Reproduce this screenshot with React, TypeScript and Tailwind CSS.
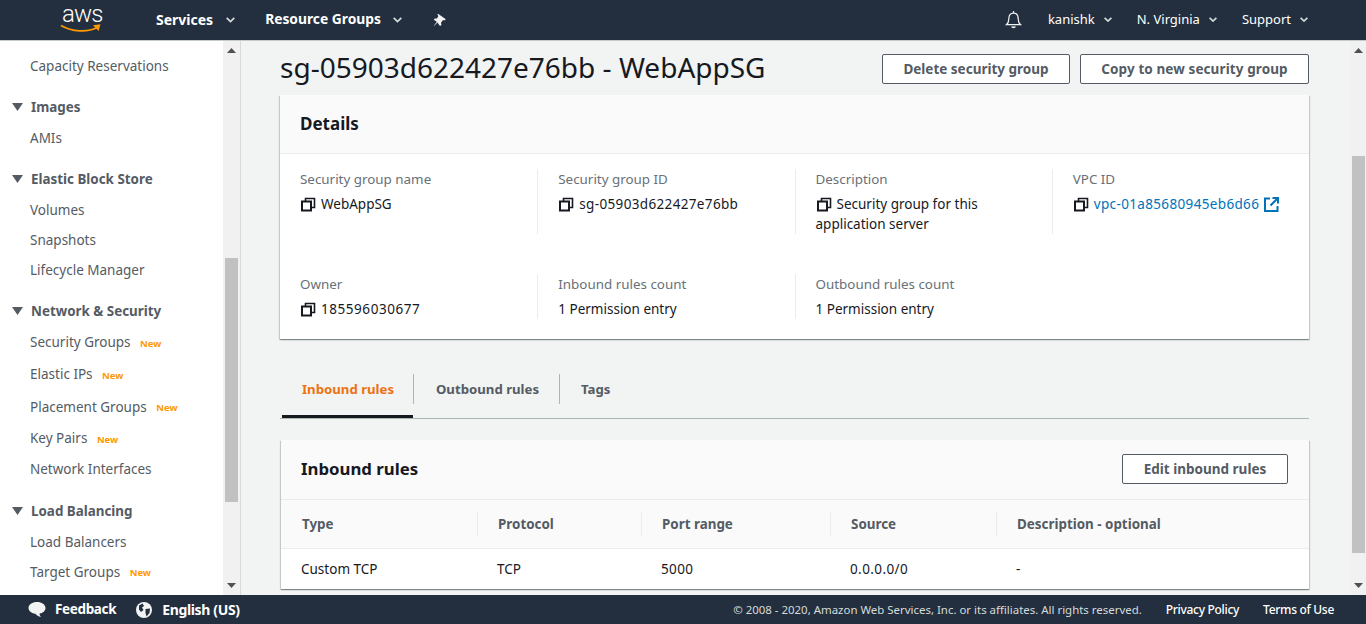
import React from 'react';

function CopyIcon() {
  return (
    <svg width="15" height="15" viewBox="0 0 15 15" className="shrink-0" fill="none" stroke="#16191f" strokeWidth="2">
      <rect x="1" y="4.5" width="9" height="9" />
      <path d="M4.5 4V1.500H13.500V10.500H10.500" strokeWidth="1.6" />
    </svg>
  );
}

function ExternalIcon() {
  return (
    <svg width="15" height="15" viewBox="0 0 15 15" fill="none" stroke="#0073bb" strokeWidth="2" className="shrink-0">
      <path d="M6 1.500H1V14H13.500V9" />
      <path d="M8.500 1H14V6.500M14 1L6.500 8.500" />
    </svg>
  );
}

function Caret() {
  return (
    <svg width="8" height="5" viewBox="0 0 8 5" className="shrink-0 ml-[9px]" fill="none" stroke="#d5dbdb" strokeWidth="1.7">
      <path d="M.6.8L4 4 7.400.8" />
    </svg>
  );
}

function NavCaret({ gap }: { gap: string }) {
  return (
    <svg width="9" height="6" viewBox="0 0 9 6" className={`shrink-0 ${gap}`} fill="none" stroke="#d5dbdb" strokeWidth="1.7">
      <path d="M.7.8L4.500 4.600 8.300.8" />
    </svg>
  );
}

function TopBar() {
  return (
    <header className="h-[41px] shrink-0 bg-[#232f3e] border-b border-b-[#c5cbcb] flex items-center text-[13px] text-white">
      <div className="w-[156px] shrink-0 pl-[60px] flex flex-col items-start mb-[7px]">
        <span className="text-[24px] leading-[28px] font-light tracking-[-0.8px] ml-[2px] [font-family:Roboto,sans-serif]">aws</span>
        <svg width="42" height="10" viewBox="0 0 42 10" className="mt-[-5px]">
          <path d="M1 2.500C12 9 28 9.500 37 4.500" fill="none" stroke="#f90" strokeWidth="1.8" />
          <path d="M33 2.200L40.500 1.200 38.500 8Z" fill="#f90" />
        </svg>
      </div>
      <span className="font-bold text-[14px] mb-px">Services</span>
      <NavCaret gap="ml-[13px]" />
      <span className="font-bold text-[13.8px] ml-[30px] mb-px">Resource Groups</span>
      <NavCaret gap="ml-[12px]" />
      <svg width="14" height="14" viewBox="0 0 14 14" className="ml-[31px]" fill="#f2f3f3">
        <path d="M5 .8L12.800 6.200 11.400 7.400 10 7 8 9.800 8.400 12 7 13 4.400 9.600 1 13 .8 12.800 3.800 8.800.8 6.800 1.800 5.400 4 5.600 5.400 3 4.400 1.600Z" />
      </svg>
      <div className="ml-auto flex items-center mb-px">
        <svg width="17" height="19" viewBox="0 0 18 20" fill="none" stroke="#f2f3f3" strokeWidth="1.3">
          <path d="M1.500 15.500C3.500 14 4 12.500 4 9.500 4 6 5.500 3.200 9 3.200S14 6 14 9.500C14 12.500 14.500 14 16.500 15.500Z" />
          <path d="M9 1v2" />
          <path d="M7 17.500C7.500 19 10.500 19 11 17.500" fill="#f2f3f3" />
        </svg>
        <span className="ml-[26px]">kanishk</span>
        <Caret />
        <span className="ml-[25px]">N. Virginia</span>
        <Caret />
        <span className="ml-[25px]">Support</span>
        <Caret />
        <span className="w-[58px]" />
      </div>
    </header>
  );
}

function NavHeading({ label }: { label: string }) {
  return (
    <div className="h-[30px] mt-[11px] mb-px flex items-center pl-[12px] font-bold text-[#545b64] text-[13.4px]">
      <svg width="11" height="8" viewBox="0 0 11 8" className="mr-[8px]"><path d="M0 0H11L5.500 8Z" fill="#545b64" /></svg>
      {label}
    </div>
  );
}

function NavItem({ label, isNew, h = 'h-[30px]' }: { label: string; isNew?: boolean; h?: string }) {
  return (
    <div className={`${h} flex items-center pl-[30px] text-[13.5px] text-[#545b64]`}>
      {label}
      {isNew && <span className="ml-[9.5px] mt-[3px] text-[9.5px] font-bold text-[#ff9900]">New</span>}
    </div>
  );
}

function Scrollbar({ wide, top, height }: { wide: string; top: string; height: string }) {
  return (
    <div className={`${wide} shrink-0 bg-[#f1f1f1] flex flex-col items-center relative`}>
      <svg width="9" height="5" viewBox="0 0 9 5" className="absolute top-[7px]"><path d="M0 5L4.500 0 9 5Z" fill="#505050" /></svg>
      <div className={`${top} ${height} w-[13px] bg-[#c1c1c1]`} />
      <svg width="9" height="5" viewBox="0 0 9 5" className="absolute bottom-[7px]"><path d="M0 0L4.500 5 9 0Z" fill="#505050" /></svg>
    </div>
  );
}

function Sidebar() {
  return (
    <aside className="w-[241px] shrink-0 flex bg-white border-r border-r-[#d5dbdb]">
      <nav className="w-[223px] shrink-0 pt-[10px] overflow-hidden">
        <NavItem label="Capacity Reservations" />
        <NavHeading label="Images" />
        <NavItem label="AMIs" />
        <NavHeading label="Elastic Block Store" />
        <NavItem label="Volumes" />
        <NavItem label="Snapshots" />
        <NavItem label="Lifecycle Manager" />
        <NavHeading label="Network & Security" />
        <NavItem label="Security Groups" isNew h="h-[31px]" />
        <NavItem label="Elastic IPs" isNew h="h-[33px]" />
        <NavItem label="Placement Groups" isNew h="h-[32px]" />
        <NavItem label="Key Pairs" isNew h="h-[31px]" />
        <NavItem label="Network Interfaces" h="h-[31px]" />
        <NavHeading label="Load Balancing" />
        <NavItem label="Load Balancers" />
        <NavItem label="Target Groups" isNew />
      </nav>
      <Scrollbar wide="w-[17px]" top="mt-[217px]" height="h-[244px]" />
    </aside>
  );
}

const cardShadow = 'shadow-[0_1px_1px_0_rgba(0,28,36,0.3),1px_1px_1px_0_rgba(0,28,36,0.15),-1px_1px_1px_0_rgba(0,28,36,0.15)]';

function Field({ label, value, divider, noCopy, link, spacing = '' }: { label: string; value: string; divider?: boolean; noCopy?: boolean; link?: boolean; spacing?: string }) {
  return (
    <div className={`pl-[20px] pr-[24px] ${divider ? 'border-l border-l-[#eaeded]' : ''}`}>
      <div className="text-[13.4px] leading-[20px] text-[#687078]">{label}</div>
      <div className={`mt-[5px] text-[13.5px] leading-[20px] ${link ? 'text-[#0073bb]' : 'text-[#16191f]'}`}>
        {!noCopy && <span className="inline-block align-[-3px] ml-px mr-[5px]"><CopyIcon /></span>}
        <span className={spacing}>{value}</span>
        {link && <span className="inline-block align-[-3px] ml-[5px]"><ExternalIcon /></span>}
      </div>
    </div>
  );
}

function DetailsCard() {
  return (
    <section className={`mt-[11px] h-[244px] bg-white ${cardShadow}`}>
      <div className="h-[59px] bg-[#fafafa] border-b border-b-[#eaeded] pl-[20px] flex items-center text-[17px] font-bold text-[#16191f]">Details</div>
      <div className="grid grid-cols-4 mt-[15px] h-[65px]">
        <Field label="Security group name" value="WebAppSG" />
        <Field divider label="Security group ID" value="sg-05903d622427e76bb" spacing="tracking-[0.35px]" />
        <Field divider label="Description" value="Security group for this application server" />
        <Field divider label="VPC ID" value="vpc-01a85680945eb6d66" link spacing="tracking-[0.35px]" />
      </div>
      <div className="grid grid-cols-4 mt-[40px] h-[45px]">
        <Field label="Owner" value="185596030677" spacing="tracking-[0.55px]" />
        <Field divider label="Inbound rules count" value="1 Permission entry" noCopy />
        <Field divider label="Outbound rules count" value="1 Permission entry" noCopy />
        <div className="" />
      </div>
    </section>
  );
}

function Tabs() {
  return (
    <div className="mt-[35px] h-[45px] flex border-b border-b-[#a9b8ae] text-[13.2px] font-bold text-[#545b64] pl-[2px]">
      <div className="w-[131px] h-[44px] border-b-[3px] border-b-[#16191f] pt-[3px] pl-[1px] flex items-start justify-center text-[#ec7211]">
        <span className="leading-[22px] mt-[1px]">Inbound rules</span>
      </div>
      <div className="w-[147px] h-[30px] pt-[2px] pl-[2px] border-l border-r border-[#aab7b8] flex items-center justify-center">Outbound rules</div>
      <div className="pl-[21px] h-[30px] pt-[2px] flex items-center">Tags</div>
    </div>
  );
}

const ruleCols = ['Type', 'Protocol', 'Port range', 'Source', 'Description - optional'];
const ruleRow = ['Custom TCP', 'TCP', '5000', '0.0.0.0/0', '-'];

function RulesCard() {
  return (
    <section className={`mt-[21px] ml-px h-[149px] bg-white ${cardShadow}`}>
      <div className="h-[60px] bg-[#fafafa] border-b border-b-[#eaeded] pl-[20px] pr-[21px] flex items-center justify-between">
        <span className="text-[16.8px] font-bold text-[#16191f] mb-[2px]">Inbound rules</span>
        <button className="w-[166px] h-[30px] mb-[2px] pt-px bg-white border border-[#545b64] rounded-[2px] text-[13.5px] font-bold text-[#545b64]">Edit inbound rules</button>
      </div>
      <div className="h-[49px] bg-[#fafafa] border-b border-b-[#eaeded] grid grid-cols-[196px_164px_189px_166px_1fr] items-center text-[13.4px] font-bold text-[#545b64]">
        {ruleCols.map((c, i) => (
          <div key={c} className={`h-[24px] flex items-center ${i > 0 ? 'pl-[20px] border-l border-l-[#eaeded]' : 'pl-[21px]'}`}>{c}</div>
        ))}
      </div>
      <div className="h-[40px] pt-px grid grid-cols-[196px_164px_189px_166px_1fr] items-center text-[13.5px] text-[#16191f]">
        {ruleRow.map((c, i) => (
          <div key={i} className={`pl-[20px] ${i === 2 || i === 3 ? 'tracking-[0.4px]' : ''}`}>{c}</div>
        ))}
      </div>
    </section>
  );
}

function Footer() {
  return (
    <footer className="h-[29px] shrink-0 bg-[#232f3e] flex items-center text-white text-[12px]">
      <svg width="18" height="17" viewBox="0 0 18 17" className="ml-[28px]" fill="#f2f3f3">
        <path d="M9 1C4.300 1 .5 3.600.5 7c0 2.200 1.500 4 3.800 5 .9.400 2 .7 3 .8 1.300 1.300 3 2.700 5.700 3.200-.8-.9-1.400-2-1.500-3.300C15 12 17.500 9.800 17.500 7 17.500 3.600 13.700 1 9 1Z" />
      </svg>
      <span className="ml-[9px] font-bold text-[13.5px] tracking-[-0.35px]">Feedback</span>
      <svg width="16" height="16" viewBox="0 0 16 16" className="ml-[20px]">
        <circle cx="8" cy="8" r="8" fill="#f2f3f3" />
        <path d="M3 3.500L6.500 1.500 8 4 6 5.500 7.500 8 5 10 3 7.500ZM9.500 7L14 6.500 13.500 11 10.500 14.500 9.500 11Z" fill="#232f3e" />
      </svg>
      <span className="ml-[10px] font-bold text-[14px] tracking-[-0.35px]">English (US)</span>
      <span className="ml-auto text-[#d5dbdb] text-[11.45px]">© 2008 - 2020, Amazon Web Services, Inc. or its affiliates. All rights reserved.</span>
      <span className="ml-[24px] font-medium tracking-[-0.3px]">Privacy Policy</span>
      <span className="ml-[24px] mr-[32px] font-medium tracking-[-0.3px]">Terms of Use</span>
    </footer>
  );
}

export default function App() {
  return (
    <div className="w-[1366px] h-[624px] flex flex-col overflow-hidden bg-[#f2f3f3] [font-family:'Noto_Sans',sans-serif]">
      <TopBar />
      <div className="flex-1 min-h-0 flex">
        <Sidebar />
        <main className="flex-1 min-w-0 pl-[39px] pr-[41px] overflow-hidden">
          <div className="mt-[13px] h-[30px] flex items-center">
            <h1 className="text-[28px] leading-[30px] mb-[4px] text-[#16191f]">sg-05903d622427e76bb - WebAppSG</h1>
            <button className="ml-auto w-[188px] h-[30px] bg-white border border-[#545b64] rounded-[2px] text-[13.5px] font-bold text-[#545b64]">Delete security group</button>
            <button className="ml-[10px] w-[229px] h-[30px] bg-white border border-[#545b64] rounded-[2px] text-[13.5px] tracking-[0.1px] font-bold text-[#545b64]">Copy to new security group</button>
          </div>
          <DetailsCard />
          <Tabs />
          <RulesCard />
        </main>
        <Scrollbar wide="w-[16px]" top="mt-[115px]" height="h-[397px]" />
      </div>
      <Footer />
    </div>
  );
}
